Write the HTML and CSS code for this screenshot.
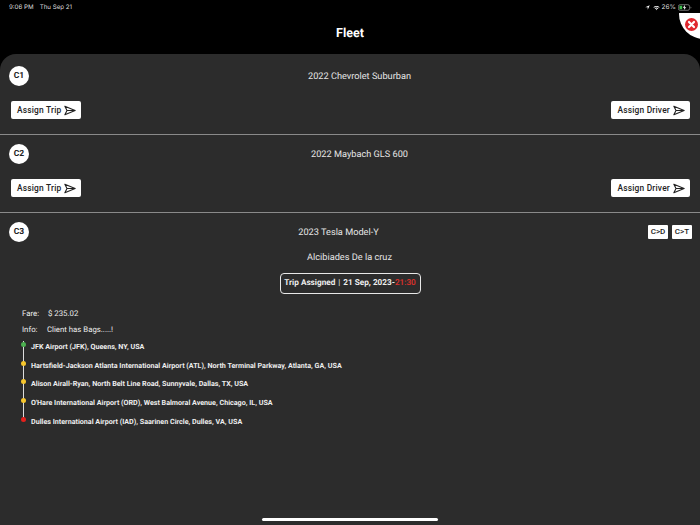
FILE: index.html
```html
<!DOCTYPE html>
<html lang="en">
<head>
<meta charset="utf-8">
<title>Fleet</title>
<link rel="stylesheet" href="styles.css">
</head>
<body>
<div class="app">
  <div class="status">
    <div class="status-left"><span>9:06 PM</span><span>Thu Sep 21</span></div>
    <div class="status-right">
      <svg class="st-loc" viewBox="0 0 8 8"><path d="M7.600.4.4 3.700h3.900v3.900z" fill="#fff"/></svg>
      <svg class="st-wifi" viewBox="0 0 12 9"><path d="M6 1c2 0 3.900.8 5.300 2.100l-1 1A6.300 6.300 0 0 0 6 2.400 6.300 6.300 0 0 0 1.700 4.100l-1-1A7.700 7.700 0 0 1 6 1zm0 2.800c1.200 0 2.300.5 3.100 1.200l-1 1A3.100 3.100 0 0 0 6 5.200c-.8 0-1.600.3-2.100.8l-1-1A4.600 4.600 0 0 1 6 3.800zM6 6.500c.5 0 .9.200 1.200.5L6 8.300 4.800 7c.3-.3.700-.5 1.200-.5z" fill="#fff"/></svg>
      <span class="st-pct">26%</span>
      <svg class="st-bat" viewBox="0 0 20 9"><rect x=".5" y=".5" width="16" height="8" rx="2.500" fill="none" stroke="#999"/><rect x="2" y="2" width="4" height="5" fill="#3fbf4f"/><path d="M10 .8 6.800 5h2.200L8.400 8.200 11.800 4H9.600z" fill="#fff"/><path d="M18 3v3c.6-.2 1-.8 1-1.500S18.600 3.200 18 3z" fill="#999"/></svg>
    </div>
  </div>
  <h1 class="title">Fleet</h1>
  <button class="close" aria-label="Close">
    <svg viewBox="0 0 12 12"><circle cx="6" cy="6" r="6" fill="#e0282e"/><path d="M3.700 3.700l4.600 4.600M8.300 3.700 3.700 8.300" stroke="#fff" stroke-width="2" stroke-linecap="round"/></svg>
  </button>

  <main class="sheet">
    <section class="row">
      <div class="row-head">
        <span class="badge">C1</span>
        <span class="name">2022 Chevrolet Suburban</span>
      </div>
      <div class="actions">
        <button class="btn">Assign Trip<svg class="send" viewBox="0 0 14 12"><path d="M1 1l12 5-12 5 2.500-5zM3.500 6H13" fill="none" stroke="#222" stroke-width="1.300" stroke-linejoin="round"/></svg></button>
        <button class="btn">Assign Driver<svg class="send" viewBox="0 0 14 12"><path d="M1 1l12 5-12 5 2.500-5zM3.500 6H13" fill="none" stroke="#222" stroke-width="1.300" stroke-linejoin="round"/></svg></button>
      </div>
    </section>
    <section class="row">
      <div class="row-head">
        <span class="badge">C2</span>
        <span class="name">2022 Maybach GLS 600</span>
      </div>
      <div class="actions">
        <button class="btn">Assign Trip<svg class="send" viewBox="0 0 14 12"><path d="M1 1l12 5-12 5 2.500-5zM3.500 6H13" fill="none" stroke="#222" stroke-width="1.300" stroke-linejoin="round"/></svg></button>
        <button class="btn">Assign Driver<svg class="send" viewBox="0 0 14 12"><path d="M1 1l12 5-12 5 2.500-5zM3.500 6H13" fill="none" stroke="#222" stroke-width="1.300" stroke-linejoin="round"/></svg></button>
      </div>
    </section>
    <section class="row row-open">
      <div class="row-head">
        <span class="badge">C3</span>
        <span class="name">2023 Tesla Model-Y</span>
        <div class="mini-group">
          <button class="mini">C&gt;D</button>
          <button class="mini">C&gt;T</button>
        </div>
      </div>
      <p class="driver">Alcibiades De la cruz</p>
      <div class="trip-wrap">
        <div class="trip">Trip Assigned <span class="sep">|</span> 21 Sep, 2023-<span class="time">21:30</span></div>
      </div>
      <dl class="facts">
        <div class="fact fact-fare"><dt>Fare:</dt><dd>$ 235.02</dd></div>
        <div class="fact fact-info"><dt>Info:</dt><dd>Client has Bags.....!</dd></div>
      </dl>
      <ol class="route">
        <li class="stop start">JFK Airport (JFK), Queens, NY, USA</li>
        <li class="stop">Hartsfield-Jackson Atlanta International Airport (ATL), North Terminal Parkway, Atlanta, GA, USA</li>
        <li class="stop">Alison Airall-Ryan, North Belt Line Road, Sunnyvale, Dallas, TX, USA</li>
        <li class="stop">O'Hare International Airport (ORD), West Balmoral Avenue, Chicago, IL, USA</li>
        <li class="stop end">Dulles International Airport (IAD), Saarinen Circle, Dulles, VA, USA</li>
      </ol>
    </section>
    <div class="home-bar"></div>
  </main>
</div>
</body>
</html>
```

FILE: styles.css
```css
* { box-sizing: border-box; }
html, body { margin: 0; height: 100%; }
body { background: #000; font-family: Roboto, "Liberation Sans", sans-serif; color: #fff; overflow: hidden; text-rendering: geometricPrecision; }
button { font-family: inherit; border: 0; padding: 0; cursor: pointer; }
.app { position: relative; width: 700px; height: 525px; display: flex; flex-direction: column; overflow: hidden; }

.status { position: relative; z-index: 2; background: #000; height: 13px; padding: 2px 8px 0 9px; display: flex; justify-content: space-between; font-family: Inter, "Liberation Sans", sans-serif; font-size: 6.200px; line-height: 9px; color: #ddd; }
.status-left { display: flex; gap: 6px; padding-top: 1px; }
.status-right { display: flex; align-items: center; gap: 2px; }
.st-loc { width: 5px; height: 5px; margin-right: 1px; }
.st-wifi { width: 7px; height: 6px; }
.st-pct { font-size: 6.500px; }
.st-bat { width: 14px; height: 7px; }
.title { margin: 0; height: 41px; padding-top: 12.500px; text-align: center; font-size: 12.500px; line-height: 16px; font-weight: 700; }
.close { position: absolute; z-index: 1; top: -11px; left: 679px; width: 50px; height: 50px; border-radius: 50%; background: #fff; }
.close svg { position: absolute; left: 5.500px; top: 28.500px; width: 13px; height: 13px; }

.sheet { position: relative; flex: 1; background: #2c2c2c; border-radius: 16px 16px 0 0; }
.row { border-bottom: 1px solid #8a8a8a; height: 78px; padding: 0 10px 0 9px; }
.row:first-child { height: 81px; padding-top: 3px; }
.row-open { border-bottom: 0; height: auto; }
.row-head { display: flex; align-items: center; height: 44px; padding-top: 9px; padding-bottom: 15px; }
.row-open .row-head { height: 38px; padding-bottom: 9px; }
.badge { width: 20px; height: 20px; flex: none; border-radius: 50%; background: #fff; color: #222; font-size: 8.500px; font-weight: 700; line-height: 20px; text-align: center; }
.name { flex: 1; text-align: center; padding-top: 1px; font-size: 9.200px; line-height: 20px; color: #e6e6e6; }
.actions { display: flex; justify-content: space-between; padding-left: 2px; }
.btn { height: 18px; display: flex; align-items: center; gap: 3px; padding: 0 5px 0 6px; background: #fff; border-radius: 2px; color: #222; font-size: 8.400px; font-weight: 500; letter-spacing: .2px; }
.send { width: 12px; height: 11px; }
.mini-group { display: flex; gap: 4px; margin-right: -2px; }
.mini { width: 20px; height: 14px; background: #fff; border-radius: 1px; color: #222; font-size: 8px; font-weight: 500; line-height: 14px; }
.driver { margin: 0; text-align: center; font-size: 9.200px; line-height: 14px; color: #e6e6e6; }
.trip-wrap { display: flex; justify-content: center; padding: 8px 0 0 1px; }
.trip { height: 21px; width: 141px; border: 1.200px solid #e8e8e8; border-radius: 4px; font-size: 8.200px; font-weight: 700; line-height: 18.500px; text-align: center; color: #eee; white-space: nowrap; }
.sep { margin: 0 1px; font-weight: 400; }
.time { color: #e0302a; font-weight: 500; }
.facts { margin: 0; padding: 12px 0 0 13px; }
.fact { display: flex; font-size: 7.800px; line-height: 10px; color: #eee; }
.fact-fare { height: 16px; padding-top: 3px; }
.fact-info { height: 18px; padding-top: 3px; }
.fact dt { font-weight: 400; }
.fact-fare dt { width: 26px; }
.fact-info dt { width: 25px; }
.fact dd { margin: 0; }
.route { list-style: none; margin: 0; padding: 1px 0 0 22px; }
.stop { position: relative; height: 18.700px; font-size: 7.150px; line-height: 12px; font-weight: 700; color: #eee; }
.stop::before { content: ""; position: absolute; left: -8px; top: 0; width: 1px; height: 18.700px; background: #ddd; }
.stop::after { content: ""; position: absolute; left: -10px; top: 1px; width: 5px; height: 5px; border-radius: 50%; background: #f5c52c; }
.start::after { background: #4caf50; }
.end::after { background: #e5201c; }
.end::before { height: 4px; }
.home-bar { position: absolute; left: 262px; top: 464px; width: 176px; height: 3px; border-radius: 2px; background: #fff; }
```
